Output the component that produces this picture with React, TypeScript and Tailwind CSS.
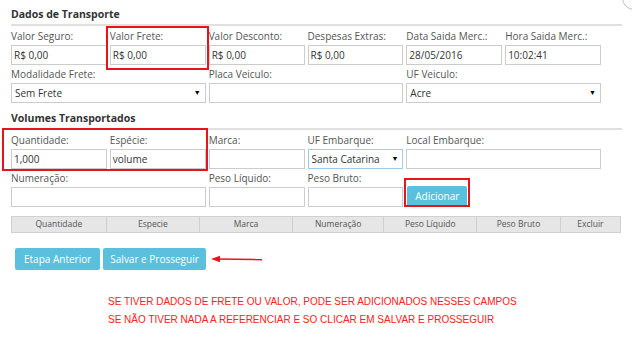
const FONT = "font-['Open_Sans',_'Noto_Sans',_sans-serif]";

function Field({ label, value, className = "" }: { label: string; value?: string; className?: string }) {
  return (
    <div className={className}>
      <div className="h-[18px] text-[10px] leading-[18px] text-[#555]">{label}</div>
      <div className="flex h-[20px] items-center border border-[#ccc] bg-white px-[2px] text-[10px] text-[#333]">
        {value}
      </div>
    </div>
  );
}

function Select({ label, value, className = "", focus = false }: { label: string; value: string; className?: string; focus?: boolean }) {
  return (
    <div className={className}>
      <div className="h-[18px] text-[10px] leading-[18px] text-[#555]">{label}</div>
      <div
        className={`flex h-[20px] items-center justify-between border bg-white pl-[3px] pr-[4px] text-[10px] text-[#333] ${
          focus ? "border-[#9ecaed]" : "border-[#ccc]"
        }`}
      >
        <span>{value}</span>
        <span className="text-[7px] text-black">▼</span>
      </div>
    </div>
  );
}

function Section({ title }: { title: string }) {
  return (
    <div className="h-[20px] border-b-2 border-[#e0e0e0] text-[10.5px] font-bold leading-[16px] text-[#333]">{title}</div>
  );
}

const COLS = [
  ["Quantidade", 96],
  ["Especie", 95],
  ["Marca", 94],
  ["Numeração", 93],
  ["Peso Líquido", 94],
  ["Peso Bruto", 85],
  ["Excluir", 60],
] as const;

export default function App() {
  return (
    <div className={`relative h-[350px] w-[632px] overflow-hidden bg-white ${FONT}`}>
      <div className="absolute -right-[14px] -top-[14px] h-[24px] w-[24px] rounded-full border border-[#bbb]" />
      <div className="px-[11px] pt-[6px]">
        <div className="w-[611px]">
          <Section title="Dados de Transporte" />
        </div>
        <div className="mt-[1px] grid w-[590px] grid-cols-6 gap-x-[3px]">
          <Field label="Valor Seguro:" value="R$ 0,00" />
          <div className="relative">
            <div className="absolute -left-[4px] -top-[1px] h-[44px] w-[103px] border-2 border-[#e8141b]" />
            <Field label="Valor Frete:" value="R$ 0,00" />
          </div>
          <Field label="Valor Desconto:" value="R$ 0,00" />
          <Field label="Despesas Extras:" value="R$ 0,00" />
          <Field label="Data Saida Merc.:" value="28/05/2016" />
          <Field label="Hora Saida Merc.:" value="10:02:41" />
          <Select label="Modalidade Frete:" value="Sem Frete" className="col-span-2" />
          <Field label="Placa Veiculo:" className="col-span-2" />
          <Select label="UF Veiculo:" value="Acre" className="col-span-2" />
        </div>

        <div className="mt-[7px] w-[611px]">
          <Section title="Volumes Transportados" />
        </div>
        <div className="mt-[1px] grid w-[590px] grid-cols-6 gap-x-[3px]">
          <div className="relative col-span-2 grid grid-cols-2 gap-x-[3px]">
            <div className="absolute -left-[9px] -top-[3px] h-[43px] w-[206px] border-2 border-[#e8141b]" />
            <Field label="Quantidade:" value="1,000" />
            <Field label="Espécie:" value="volume" />
          </div>
          <Field label="Marca:" />
          <Select label="UF Embarque:" value="Santa Catarina" focus />
          <Field label="Local Embarque:" className="col-span-2" />
          <Field label="Numeração:" className="col-span-2" />
          <Field label="Peso Líquido:" />
          <Field label="Peso Bruto:" />
          <div className="flex items-end">
            <div className="relative ml-[1px]">
              <div className="absolute -left-[3px] -top-[4px] h-[29px] w-[66px] border-2 border-[#e8141b]" />
              <button className="h-[21px] w-[60px] rounded-[2px] bg-[#5bc0de] text-[10px] text-white">Adicionar</button>
            </div>
          </div>
        </div>

        <div className="mt-[9px] flex h-[17px] border border-[#d0d0d0] bg-[#e6e6e6]">
          {COLS.map(([name, w], i) => (
            <div
              key={name}
              style={{ width: w }}
              className={`flex items-center justify-center text-[8.5px] text-[#555] ${i < COLS.length - 1 ? "border-r border-[#cfcfcf]" : ""}`}
            >
              {name}
            </div>
          ))}
        </div>

        <div className="mt-[15px] flex items-center gap-[3px] pl-[4px]">
          <button className="h-[22px] rounded-[2px] bg-[#5bc0de] px-[9px] text-[10px] text-white">Etapa Anterior</button>
          <button className="h-[22px] rounded-[2px] bg-[#5bc0de] px-[7px] text-[10px] text-white">Salvar e Prosseguir</button>
          <svg width="52" height="8" viewBox="0 0 52 8" className="ml-[2px]">
            <line x1="6" y1="4" x2="51" y2="4.6" stroke="#e8141b" strokeWidth="1.6" />
            <polygon points="0,4 9,0.8 9,7.2" fill="#e8141b" />
          </svg>
        </div>

        <div className="mt-[23px] pl-[97px] text-[10px] leading-[18px] text-[#ff2020] font-['Liberation_Sans',_sans-serif]">
          <div>SE TIVER DADOS DE FRETE OU VALOR, PODE SER ADICIONADOS NESSES CAMPOS</div>
          <div>SE NÃO TIVER NADA A REFERENCIAR E SO CLICAR EM SALVAR E PROSSEGUIR</div>
        </div>
      </div>
    </div>
  );
}
